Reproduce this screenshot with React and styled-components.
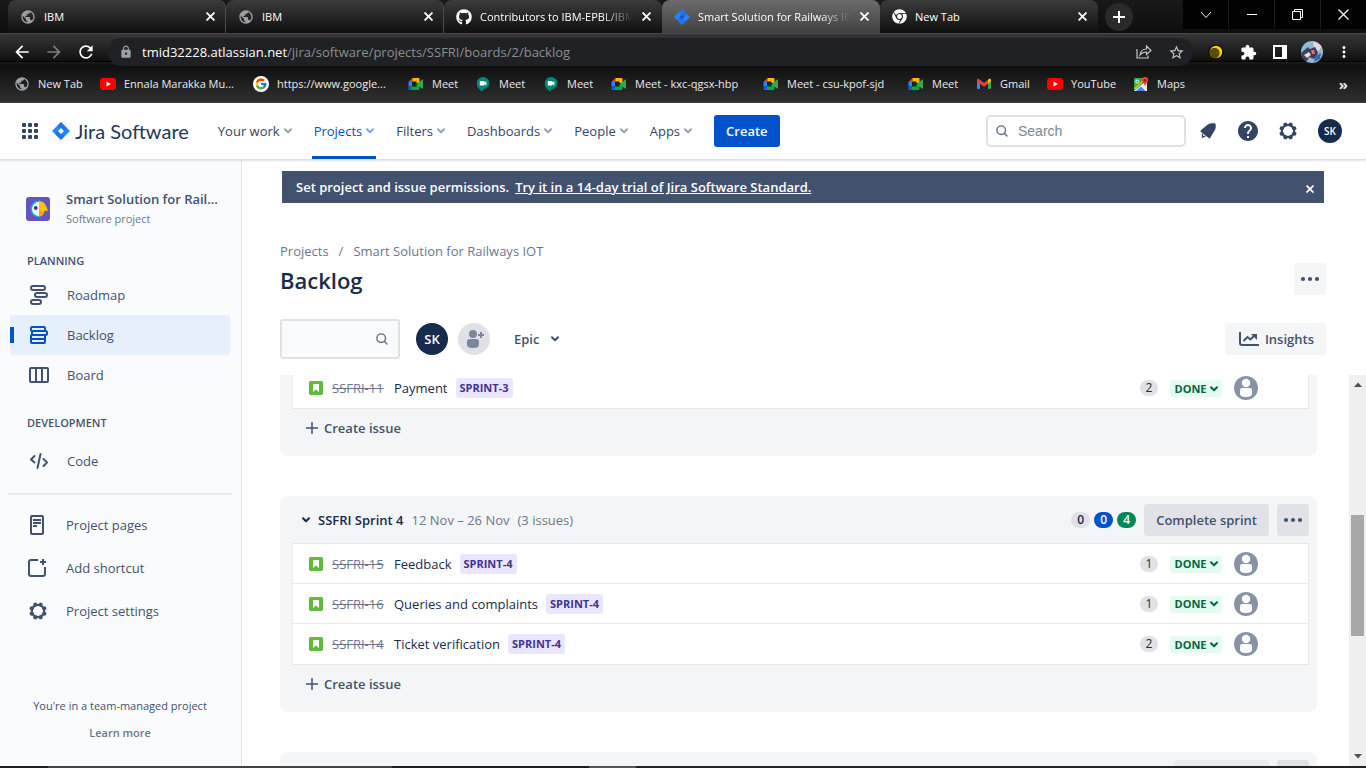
import React from 'react';
import styled, { createGlobalStyle, css } from 'styled-components';
import { FcGoogle } from 'react-icons/fc';
import { FaGithub, FaChrome } from 'react-icons/fa';
import {
  MdPublic, MdLock, MdArrowBack, MdArrowForward, MdRefresh, MdStarBorder,
  MdExtension, MdMoreVert, MdHelp,
} from 'react-icons/md';

const Global = createGlobalStyle`
  *, *::before, *::after { box-sizing: border-box; }
  body { margin: 0; background: #fff; font-family: 'Open Sans', 'Noto Sans', sans-serif; font-size: 13px; line-height: 20px; color: #172b4d; }
  button, input { font: inherit; color: inherit; margin: 0; }
  button { border: 0; background: none; padding: 0; cursor: pointer; }
  a { color: inherit; text-decoration: none; }
  ul { list-style: none; margin: 0; padding: 0; }
  h1, h2, p { margin: 0; }
  svg { display: block; flex: none; }
`;

const Page = styled.div`
  display: flex;
  flex-direction: column;
  height: 100vh;
  overflow: hidden;
`;

/* ---------- browser frame ---------- */

const TabStrip = styled.div`
  display: flex;
  flex: none;
  height: 33px;
  padding-left: 8px;
  background: linear-gradient(#191919, #0e0e0e);
  color: #fff;
  font-size: 11px;
`;

const Tab = styled.div`
  display: flex;
  align-items: center;
  flex: 0 1 218px;
  min-width: 0;
  padding: 0 7px 0 12px;
  gap: 8px;
  border-radius: 8px 8px 0 0;
  background: ${(p) => (p.$active ? 'linear-gradient(#6c6c6c, #404040)' : 'linear-gradient(#3b3b3b, #101010)')};
  border-right: 1px solid ${(p) => (p.$divider ? '#4c4c4c' : 'transparent')};
`;

const TabTitle = styled.span`
  flex: 1;
  min-width: 0;
  overflow: hidden;
  white-space: nowrap;
  ${(p) => p.$fade && css`mask-image: linear-gradient(90deg, #000 80%, transparent 100%);`}
`;

const TabClose = styled.button`
  display: grid;
  place-items: center;
  width: 16px;
  height: 16px;
  margin-left: -3px;
`;

const NewTabButton = styled.button`
  display: grid;
  place-items: center;
  align-self: center;
  width: 28px;
  height: 28px;
  margin-left: 7px;
  border-radius: 50%;
  background: #2a2a2a;
`;

const WindowControls = styled.div`
  display: flex;
  gap: 1px;
  height: 29px;
  margin-left: auto;
  background: #1b1b1b;
`;

const WindowButton = styled.button`
  display: grid;
  place-items: center;
  width: 45px;
  background: #020202;
`;

const Toolbar = styled.div`
  display: flex;
  align-items: flex-start;
  flex: none;
  height: 33px;
  padding: 4px 6px 0;
  border-top: 1px solid #484848;
  background: linear-gradient(#363636 0, #101010 27px, #000 27px, #000 28px, #1c1c1c 28px, #101010 100%);
  color: #fff;
`;

const ToolButton = styled.button`
  display: grid;
  place-items: center;
  flex: none;
  width: 32px;
  height: 28px;
  color: ${(p) => (p.$dim ? '#7d7d7d' : '#fff')};
`;

const AddressBar = styled.div`
  display: flex;
  align-items: center;
  flex: 1;
  height: 28px;
  margin: 0 7px 0 6px;
  padding: 0 1px 0 11px;
  border-radius: 14px;
  background: #202124;
  color: #9aa0a6;
`;

const AddressText = styled.span`
  flex: 1;
  margin-left: 9px;
  font-size: 13px;
  color: #8b8e92;
  b { font-weight: 400; color: #fff; }
`;

const ProfileBubble = styled.span`
  display: block;
  width: 22px;
  height: 22px;
  border-radius: 50%;
  overflow: hidden;
`;

const Bookmarks = styled.nav`
  display: flex;
  align-items: center;
  flex: none;
  height: 37px;
  padding: 0 18px 0 14px;
  border-bottom: 1px solid #3c3c3c;
  background: linear-gradient(#0f0f0f, #303030);
  color: #e8eaed;
  font-size: 11px;
`;

const Bookmark = styled.a`
  display: flex;
  align-items: center;
  gap: 8px;
  flex: 0 1 ${(p) => p.$width}px;
  white-space: nowrap;
`;

const BookmarkOverflow = styled.button`
  margin-left: auto;
  font-size: 15px;
  font-weight: 700;
`;

const TaskbarEdge = styled.div`
  flex: none;
  height: 2px;
  background: linear-gradient(90deg, #222 0 48px, #444 48px 392px, #1e1e1e 392px 589px, #555 589px 636px, #222 636px);
`;

/* ---------- product header ---------- */

const Header = styled.header`
  display: flex;
  align-items: center;
  flex: none;
  height: 57px;
  padding: 0 24px 0 18px;
  border-bottom: 1px solid #dcdfe5;
  box-shadow: 0 1px 2px rgba(9, 30, 66, 0.13);
  position: relative;
  color: #344563;
`;

const Brand = styled.a`
  display: flex;
  align-items: center;
  gap: 5px;
  margin: 0 27px 0 10px;
  font-family: Lato, sans-serif;
  font-size: 20px;
  color: #253858;
`;

const Menu = styled.nav`
  display: flex;
  align-self: stretch;
  gap: 18px;
`;

const MenuItem = styled.button`
  display: flex;
  align-items: center;
  gap: 4px;
  padding: 3px 2px 0;
  border-bottom: 3px solid ${(p) => (p.$active ? '#0052cc' : 'transparent')};
  color: ${(p) => (p.$active ? '#0052cc' : '#344563')};
  font-weight: 500;
  svg { opacity: 0.5; }
`;

const CreateButton = styled.button`
  height: 32px;
  margin-left: 20px;
  padding: 0 12px;
  border-radius: 3px;
  background: #0052cc;
  color: #fff;
  font-weight: 600;
`;

const HeaderSearch = styled.label`
  display: flex;
  align-items: center;
  gap: 9px;
  width: 200px;
  height: 32px;
  margin-left: auto;
  padding: 0 7px;
  border: 2px solid #dfe1e6;
  border-radius: 5px;
  color: #6b778c;
  input {
    width: 100%;
    border: 0;
    outline: 0;
    padding: 0;
    background: none;
    font-family: 'Liberation Sans', Arial, sans-serif;
    font-size: 14px;
  }
  input::placeholder { color: #7a869a; opacity: 1; }
`;

const HeaderActions = styled.div`
  display: flex;
  align-items: center;
  gap: 16px;
  margin: 0 18px 0 10px;
`;

const IconButton = styled.button`
  display: grid;
  place-items: center;
  width: 24px;
  height: 24px;
`;

const Initials = styled.button`
  display: grid;
  place-items: center;
  flex: none;
  width: ${(p) => p.$size}px;
  height: ${(p) => p.$size}px;
  border-radius: 50%;
  background: #172b4d;
  color: #fff;
  font-size: ${(p) => (p.$size > 24 ? 13 : 10)}px;
  font-weight: 600;
`;

/* ---------- body ---------- */

const Body = styled.div`
  display: flex;
  flex: 1;
  min-height: 0;
`;

const Sidebar = styled.aside`
  display: flex;
  flex-direction: column;
  flex: none;
  width: 242px;
  padding: 29px 11px 0 10px;
  border-right: 1px solid #e3e4e8;
  background: #fafbfc;
  color: #42526e;
`;

const ProjectHeading = styled.div`
  display: flex;
  align-items: center;
  gap: 16px;
  height: 40px;
  padding-left: 16px;
  strong { display: block; font-weight: 600; white-space: nowrap; }
  small { display: block; font-size: 11px; color: #6b778c; }
`;

const SectionLabel = styled.h2`
  height: ${(p) => p.$height}px;
  padding: 12px 17px 0;
  margin-top: ${(p) => p.$gap}px;
  font-size: 11px;
  line-height: 16px;
  font-weight: 600;
`;

const NavLink = styled.a`
  display: flex;
  align-items: center;
  gap: 16px;
  height: ${(p) => p.$height || 40}px;
  padding-left: 17px;
  border-radius: 3px;
  ${(p) => p.$active && css`
    background: linear-gradient(#0052cc, #0052cc) 0 50% / 4px 16px no-repeat, #e6effc;
    svg { color: #0052cc; }
  `}
`;

const ToolLinks = styled.div`
  margin-left: -1px;
`;

const Divider = styled.hr`
  width: 224px;
  height: 2px;
  margin: 12px -2px 9px;
  border: 0;
  background: #e8eaed;
`;

const SidebarFooter = styled.div`
  margin: auto 0 22px;
  text-align: center;
  font-size: 11px;
  p { line-height: 22px; margin-bottom: 5px; }
  a { display: block; line-height: 22px; font-weight: 600; color: #6b778c; }
`;

const Main = styled.main`
  display: flex;
  flex-direction: column;
  flex: 1;
  min-width: 0;
  padding-top: 11px;
`;

const Banner = styled.div`
  display: flex;
  align-items: center;
  gap: 6px;
  height: 32px;
  flex: none;
  margin: 0 42px 0 40px;
  padding: 0 10px 0 14px;
  background: #42526e;
  color: #fff;
  font-weight: 600;
  a { text-decoration: underline; }
  button { margin-left: auto; padding-top: 3px; }
`;

const Crumbs = styled.nav`
  display: flex;
  gap: 10px;
  margin: 38px 40px 0 38px;
  color: #6b778c;
`;

const TitleRow = styled.div`
  display: flex;
  align-items: center;
  justify-content: space-between;
  height: 32px;
  margin: 2px 40px 0 38px;
  h1 { font-size: 22px; line-height: 28px; font-weight: 600; padding-top: 2px; }
`;

const Controls = styled.div`
  display: flex;
  align-items: center;
  flex: none;
  height: 40px;
  margin: 24px 40px 16px 38px;
  color: #42526e;
  font-weight: 600;
`;

const FilterBox = styled.label`
  display: flex;
  align-items: center;
  width: 120px;
  height: 40px;
  padding: 0 9px;
  margin-right: 16px;
  border: 2px solid #dfe1e6;
  border-radius: 3px;
  background: #fafbfc;
  input { flex: 1; min-width: 0; border: 0; outline: 0; padding: 0; background: none; }
`;

const AddPeople = styled.button`
  width: 32px;
  height: 32px;
  margin: 0 24px 0 10px;
`;

const EpicButton = styled.button`
  display: flex;
  align-items: center;
  gap: 12px;
`;

const SoftButton = styled.button`
  display: flex;
  align-items: center;
  justify-content: center;
  gap: 6px;
  flex: none;
  min-width: ${(p) => p.$minWidth || 32}px;
  height: 32px;
  padding: 0 ${(p) => (p.$square ? 0 : 12)}px;
  border-radius: 3px;
  background: ${(p) => (p.$strong ? '#e1e2e8' : '#f4f5f7')};
  color: #42526e;
  font-weight: 600;
  &:disabled { background: #eaebee; }
`;

const Push = styled.span`
  flex: 1;
`;

const ScrollArea = styled.div`
  display: flex;
  flex: 1;
  min-height: 0;
  overflow: hidden;
`;

const SprintList = styled.div`
  flex: 1;
  min-width: 0;
  padding: 0 32px 0 38px;
  margin-top: -8px;
`;

const SprintCard = styled.section`
  margin-bottom: 40px;
  padding: 0 8px 9px 12px;
  border-radius: ${(p) => (p.$continued ? '0 0 8px 8px' : '8px')};
  background: #f4f5f7;
`;

const SprintHeader = styled.div`
  display: flex;
  align-items: center;
  height: 47px;
  padding: 1px 0 0 2px;
  h2 { margin: 0 8px 0 0; font-size: 13px; font-weight: 600; }
`;

const SprintMeta = styled.span`
  margin-right: 8px;
  color: #6b778c;
`;

const SprintActions = styled.div`
  display: flex;
  gap: 8px;
`;

const IssueList = styled.ul`
  border: 1px solid #e8e9ed;
  background: #fff;
`;

const IssueRow = styled.li`
  display: flex;
  align-items: center;
  height: 40px;
  padding: 0 50px 0 16px;
  &:not(:last-child) { border-bottom: 1px solid #e8e9ed; }
`;

const IssueKey = styled.a`
  width: 54px;
  margin: 0 8px 0 9px;
  color: #6b778c;
  text-decoration: line-through;
  white-space: nowrap;
`;

const EpicTag = styled.span`
  margin-left: 8px;
  padding: 0 4px;
  border-radius: 3px;
  background: #eae6ff;
  color: #403294;
  font-size: 11px;
  font-weight: 700;
`;

const tones = {
  grey: css`background: #dfe1e6; color: #172b4d;`,
  blue: css`background: #0052cc; color: #fff;`,
  green: css`background: #00875a; color: #fff;`,
};

const Count = styled.span`
  min-width: ${(p) => (p.$wide ? 19 : 18)}px;
  height: 16px;
  border-radius: 8px;
  font-size: 12px;
  line-height: 16px;
  text-align: center;
  font-weight: ${(p) => (p.$wide ? 600 : 400)};
  ${(p) => tones[p.$tone || 'grey']}
`;

const CountGroup = styled.div`
  display: flex;
  gap: 4px;
  margin: 0 8px 0 auto;
`;

const StatusButton = styled.button`
  display: flex;
  align-items: center;
  justify-content: center;
  gap: 3px;
  width: 52px;
  height: 17px;
  margin: 1px 12px 0;
  border-radius: 3px;
  background: #e3fcef;
  color: #006644;
  font-size: 11px;
  line-height: 16px;
  font-weight: 700;
`;

const CreateIssue = styled.button`
  display: flex;
  align-items: center;
  gap: 6px;
  height: 38px;
  padding-left: 14px;
  color: #42526e;
  font-weight: 600;
`;

const ScrollTrack = styled.div`
  display: flex;
  flex-direction: column;
  align-items: center;
  flex: none;
  width: 17px;
  padding: 7px 0;
  background: #f0f0f0;
`;

const ScrollThumb = styled.span`
  flex: 0 1 121px;
  width: 13px;
  background: #a8a8a8;
`;

const ScrollGap = styled.span`
  flex: ${(p) => p.$grow} 1 0;
`;

/* ---------- drawings ---------- */

const Cross = ({ size = 8, width = 2 }) => (
  <svg width={size} height={size} viewBox="0 0 8 8" stroke="currentColor" strokeWidth={width} fill="none">
    <path d="M0.5 0.5l7 7M7.5 0.5l-7 7" />
  </svg>
);

const Chevron = () => (
  <svg width="8" height="6" viewBox="0 0 8 6" fill="none" stroke="currentColor" strokeWidth="2" strokeLinecap="round" strokeLinejoin="round">
    <path d="M1 1.2L4 4.2L7 1.2" />
  </svg>
);

const SearchIcon = () => (
  <svg width="14" height="14" viewBox="0 0 14 14" fill="none" stroke="#5e6c84" strokeWidth="1.4">
    <circle cx="6.2" cy="6.2" r="4.3" />
    <path d="M9.3 9.3L12 12" strokeLinecap="round" />
  </svg>
);

const Dots = () => (
  <svg width="20" height="6" viewBox="0 0 20 6" fill="currentColor">
    <circle cx="3" cy="3" r="2.1" /><circle cx="10" cy="3" r="2.1" /><circle cx="17" cy="3" r="2.1" />
  </svg>
);

const AppGrid = () => (
  <svg width="16" height="16" viewBox="0 0 16 16" fill="currentColor">
    {[0, 6, 12].map((y) => [0, 6, 12].map((x) => <rect key={`${x}-${y}`} x={x} y={y} width="4" height="4" rx="1" />))}
  </svg>
);

const JiraMark = ({ size = 18 }) => (
  <svg width={size} height={size} viewBox="0 0 18 18">
    <path d="M9 0L18 9L9 18L0 9Z" fill="#2684ff" />
    <path d="M9 0L5.6 3.4Q5.6 6 9 6.2L11.8 9L15 6Z" fill="#1868db" opacity="0.55" />
    <path d="M9 18L12.4 14.6Q12.4 12 9 11.8L6.2 9L3 12Z" fill="#1868db" opacity="0.55" />
    <path d="M9 6.1L11.9 9L9 11.9L6.1 9Z" fill={size > 16 ? '#fff' : '#1558bc'} />
  </svg>
);

const Gear = () => (
  <svg width="18" height="18" viewBox="0 0 18 18" fill="currentColor">
    {[22.5, 67.5, 112.5, 157.5, 202.5, 247.5, 292.5, 337.5].map((a) => (
      <rect key={a} x="7.2" y="0.2" width="3.6" height="4" rx="1.2" transform={`rotate(${a} 9 9)`} />
    ))}
    <circle cx="9" cy="9" r="6.2" fill="none" stroke="currentColor" strokeWidth="2.2" />
  </svg>
);

const Horn = () => (
  <svg width="16" height="16" viewBox="0 0 16 16" fill="currentColor">
    <path d="M15.4 0.4C16 2.8 16 5.4 14.6 7.6L9.6 15.8L0.4 8.4C0.6 7.6 1 7 1.8 6.4L7.8 1.6C10 0 12.8 0 15.4 0.4Z" />
    <path d="M2.6 10.8L2.4 14.2L5.4 13.2" fill="none" stroke="currentColor" strokeWidth="1.3" />
  </svg>
);

const ProjectAvatar = () => (
  <svg width="24" height="24" viewBox="0 0 24 24">
    <rect width="24" height="24" rx="3" fill="#6554c0" />
    <path d="M13 3.6A8.4 8.4 0 0 0 13 20.400Z" fill="#00b8d9" />
    <path d="M13 5A7 7 0 0 0 13 19Z" fill="#fff" />
    <path d="M13 4C18 4 20.5 8 21.8 14L18.6 13.4C18 17 16 19.5 13 19.8Z" fill="#ffc400" />
    <path d="M13 12.5L17 15.6C16 18 15 19 13 19.8Z" fill="#ff991f" />
    <circle cx="9.800" cy="11" r="1.900" fill="#403294" />
  </svg>
);

const RoadmapIcon = () => (
  <svg width="24" height="24" viewBox="0 0 24 24" fill="none" stroke="currentColor" strokeWidth="2">
    <rect x="4" y="3" width="14" height="4" rx="2" />
    <rect x="8" y="10" width="12" height="4" rx="2" />
    <rect x="4" y="17" width="10" height="4" rx="2" />
  </svg>
);

const BacklogIcon = () => (
  <svg width="24" height="24" viewBox="0 0 24 24" fill="none" stroke="currentColor" strokeWidth="2">
    <rect x="4" y="4" width="14" height="4" rx="1" />
    <rect x="5" y="8" width="15" height="4" rx="1.5" />
    <rect x="4" y="12" width="14" height="8" rx="1" />
    <path d="M4 16H18" />
  </svg>
);

const BoardIcon = () => (
  <svg width="24" height="24" viewBox="0 0 24 24" fill="none" stroke="currentColor" strokeWidth="2">
    <rect x="3" y="5" width="18" height="14" rx="1" />
    <path d="M9 5V19M15 5V19" />
  </svg>
);

const CodeIcon = () => (
  <svg width="24" height="24" viewBox="0 0 24 24" fill="none" stroke="currentColor" strokeWidth="2" strokeLinecap="round" strokeLinejoin="round">
    <path d="M7.5 7L4 10.500L7.5 13.500M13.500 5L10.500 19M16.500 10L20 13.500L16.500 17" />
  </svg>
);

const PagesIcon = () => (
  <svg width="24" height="24" viewBox="0 0 24 24" fill="none" stroke="currentColor" strokeWidth="2">
    <rect x="5" y="3" width="12" height="18" rx="1" />
    <path d="M7 7H15M7 10H15M7 13H11" />
  </svg>
);

const ShortcutIcon = () => (
  <svg width="24" height="24" viewBox="0 0 24 24" fill="none" stroke="currentColor" strokeWidth="2">
    <path d="M12 4H5Q3 4 3 6V18Q3 20 5 20H17Q19 20 19 18V11" />
    <path d="M17 3V9M14 6H20" />
  </svg>
);

const SettingsIcon = () => (
  <svg width="24" height="24" viewBox="-3 -3 24 24" overflow="visible"><Gear /></svg>
);

const StoryIcon = () => (
  <svg width="14" height="14" viewBox="0 0 14 14">
    <rect width="14" height="14" rx="1.5" fill="#63ba3c" />
    <path d="M4 3.6Q4 3 4.6 3H9.4Q10 3 10 3.6V11L7 8.5L4 11Z" fill="#fff" />
  </svg>
);

const Unassigned = () => (
  <svg width="24" height="24" viewBox="0 0 24 24">
    <circle cx="12" cy="12" r="12" fill="#8993a4" />
    <circle cx="12" cy="7" r="4.2" fill="#fff" />
    <path d="M6 14Q6 12 8 12H16Q18 12 18 14V17.5Q18 21 12 21Q6 21 6 17.5Z" fill="#fff" />
  </svg>
);

const AddPerson = () => (
  <svg width="32" height="32" viewBox="0 0 32 32">
    <circle cx="16" cy="16" r="16" fill="#dfe1e6" />
    <g fill="#7a869a">
      <circle cx="15" cy="11" r="4" />
      <path d="M9 19Q9 16 12 16H18Q21 16 21 19V21.5Q21 25 15 25Q9 25 9 21.5Z" />
      <path d="M22 9H24V11H26V13H24V15H22V13H20V11H22Z" />
    </g>
  </svg>
);

const InsightsIcon = () => (
  <svg width="22" height="16" viewBox="0 0 22 16" fill="none" stroke="currentColor" strokeWidth="2">
    <path d="M3 1V12Q3 14 5 14H22" />
    <path d="M6.5 10L10.5 6L13.5 8.5L18 4" />
    <path d="M14 3H20V9Z" fill="currentColor" stroke="none" />
  </svg>
);

const PlusIcon = ({ size = 12, width = 1.5 }) => (
  <svg width={size} height={size} viewBox="0 0 12 12" stroke="currentColor" strokeWidth={width}>
    <path d="M6 0V12M0 6H12" />
  </svg>
);

const YouTube = () => (
  <svg width="16" height="16" viewBox="0 0 16 16">
    <rect y="2" width="16" height="12" rx="3" fill="#f00" />
    <path d="M6.5 5.5V10.5L10.8 8Z" fill="#fff" />
  </svg>
);

const GoogleBadge = () => (
  <svg width="16" height="16" viewBox="0 0 16 16">
    <circle cx="8" cy="8" r="8" fill="#fff" />
    <FcGoogle x="1.5" y="1.5" size="13" />
  </svg>
);

const Meet = () => (
  <svg width="16" height="16" viewBox="0 0 16 16">
    <path d="M4.5 2L0.5 6H4.5Z" fill="#ea4335" />
    <path d="M0.5 6H4V10.5H0.5Z" fill="#2684fc" />
    <path d="M0.5 10.5H4V14H1.5Q0.5 14 0.500 13Z" fill="#0066da" />
    <path d="M4.5 2H10.5Q11.5 2 11.5 3V7H8.5V5.5H4.5Z" fill="#ffba00" />
    <path d="M4 10.5H8.500V8H11.5V13Q11.5 14 10.5 14H4Z" fill="#00ac47" />
    <path d="M9 8L15 3V13L11 10.500Z" fill="#34a853" />
  </svg>
);

const MeetOld = () => (
  <svg width="16" height="16" viewBox="0 0 16 16">
    <path d="M8 1A6.200 6.200 0 1 1 8 13.400V15.500C4 14 1.800 11 1.800 7.200A6.200 6.200 0 0 1 8 1Z" fill="#00897b" />
    <path d="M4.800 5H9.400V6.600L11.400 5.200V9.400L9.400 8V9.600H4.800Z" fill="#fff" />
  </svg>
);

const Gmail = () => (
  <svg width="16" height="16" viewBox="0 0 16 16">
    <path d="M1 4V12Q1 13 2 13H4V6Z" fill="#4285f4" />
    <path d="M15 4V12Q15 13 14 13H12V6Z" fill="#34a853" />
    <path d="M1 4Q1 2 3 3L8 7L13 3Q15 2 15 4V5.500L8 10.800L1 5.500Z" fill="#ea4335" />
    <path d="M12 3.800L13 3Q15 2 15 4V5.500L12 7.800Z" fill="#fbbc04" />
  </svg>
);

const Maps = () => (
  <svg width="16" height="16" viewBox="0 0 16 16">
    <rect x="1" y="2" width="13" height="13" rx="1" fill="#34a853" />
    <path d="M1 15L14 4V15Z" fill="#e8eaed" />
    <path d="M3 15L8 10.500L12.500 15Z" fill="#4285f4" />
    <path d="M1.500 13L10 4.500" stroke="#fbbc04" strokeWidth="1.500" />
    <path d="M12 1A3.200 3.200 0 0 1 15.200 4.200C15.200 6.500 12.500 7.500 12 10.500C11.500 7.500 8.800 6.500 8.800 4.200A3.200 3.200 0 0 1 12 1Z" fill="#ea4335" />
    <circle cx="12" cy="4.200" r="1.200" fill="#811e16" />
    <circle cx="4.200" cy="5.500" r="1.500" fill="none" stroke="#fff" />
  </svg>
);

const ShareIcon = () => (
  <svg width="16" height="14" viewBox="0 0 16 14" fill="none" stroke="#c4c7c5" strokeWidth="1.200">
    <path d="M1 4V13H12V10.500" />
    <path d="M4 10C4.500 6 7 4 10.500 4V1L15 5.500L10.500 9.500V7C7.500 7 5.500 8 4 10Z" />
  </svg>
);

const Moon = () => (
  <svg width="16" height="16" viewBox="0 0 16 16">
    <circle cx="8" cy="8" r="7.600" fill="#0a0a0a" />
    <circle cx="8" cy="8" r="6.200" fill="#ffd600" />
    <circle cx="6.500" cy="9" r="5.200" fill="#5b4c08" />
  </svg>
);

const SidePanel = () => (
  <svg width="14" height="14" viewBox="0 0 14 14">
    <path fill="#fff" fillRule="evenodd" d="M0 0H14V14H0ZM2 2V12H9V2Z" />
  </svg>
);

const ProfileArt = () => (
  <svg width="22" height="22" viewBox="0 0 22 22">
    <rect width="22" height="22" fill="#8fb9d6" />
    <path d="M0 12L7 6L11 11L6 20H0Z" fill="#37425c" />
    <path d="M12 0L21 5L18 10L13 7Z" fill="#e9d5dc" />
    <path d="M9 8L14 6L17 12L13 18L8 16Z" fill="#4d3353" />
    <path d="M3 14L8 11L10 14L6 17Z" fill="#f0d9d4" />
    <path d="M10 9L13 9L14 13L11 13Z" fill="#cf7a7c" />
    <path d="M14 15L20 12L19 18L13 21Z" fill="#2f6ba5" />
  </svg>
);

const windowActions = [
  ['Search tabs', <svg width="14" height="8" viewBox="0 0 14 8" fill="none" stroke="#fff"><path d="M2 1L7 6.500L12 1" /></svg>],
  ['Minimise', <svg width="10" height="2" viewBox="0 0 10 2"><rect width="10" height="1" fill="#fff" /></svg>],
  ['Restore', <svg width="11" height="11" viewBox="0 0 11 11" fill="none" stroke="#fff"><path d="M0.500 2.500H8.500V10.500H0.500ZM2.500 2.500V0.500H10.500V8.500H8.500" /></svg>],
  ['Close', <svg width="11" height="11" viewBox="0 0 11 11" fill="none" stroke="#fff" strokeWidth="1.200"><path d="M0.500 0.500L10.500 10.500M10.500 0.500L0.500 10.500" /></svg>],
];

/* ---------- data ---------- */

const tabs = [
  { title: 'IBM', icon: <MdPublic size={16} color="#9aa0a6" />, divider: true },
  { title: 'IBM', icon: <MdPublic size={16} color="#9aa0a6" />, divider: true },
  { title: 'Contributors to IBM-EPBL/IBM-Project', icon: <FaGithub size={16} />, fade: true },
  { title: 'Smart Solution for Railways IOT', icon: <JiraMark size={16} />, fade: true, active: true },
  { title: 'New Tab', icon: <FaChrome size={15} /> },
];

const bookmarks = [
  ['New Tab', <MdPublic size={16} color="#9aa0a6" />, 86],
  ['Ennala Marakka Mu...', <YouTube />, 153],
  ['https://www.google...', <GoogleBadge />, 155],
  ['Meet', <Meet />, 67],
  ['Meet', <MeetOld />, 68],
  ['Meet', <MeetOld />, 68],
  ['Meet - kxc-qgsx-hbp', <Meet />, 152],
  ['Meet - csu-kpof-sjd', <Meet />, 145],
  ['Meet', <Meet />, 68],
  ['Gmail', <Gmail />, 71],
  ['YouTube', <YouTube />, 86],
  ['Maps', <Maps />, 60],
];

const menu = ['Your work', 'Projects', 'Filters', 'Dashboards', 'People', 'Apps'];

const sprintFour = [
  { id: 'SSFRI-15', title: 'Feedback', tag: 'SPRINT-4', points: 1 },
  { id: 'SSFRI-16', title: 'Queries and complaints', tag: 'SPRINT-4', points: 1 },
  { id: 'SSFRI-14', title: 'Ticket verification', tag: 'SPRINT-4', points: 2 },
];

const sprintThree = [{ id: 'SSFRI-11', title: 'Payment', tag: 'SPRINT-3', points: 2 }];

const Issues = ({ items }) => (
  <IssueList>
    {items.map((issue) => (
      <IssueRow key={issue.id}>
        <StoryIcon />
        <IssueKey href="#">{issue.id}</IssueKey>
        <span>{issue.title}</span>
        <EpicTag>{issue.tag}</EpicTag>
        <Push />
        <Count>{issue.points}</Count>
        <StatusButton>DONE<Chevron /></StatusButton>
        <Unassigned />
      </IssueRow>
    ))}
  </IssueList>
);

export default function App() {
  return (
    <Page>
      <Global />
      <TabStrip>
        {tabs.map((tab, i) => (
          <Tab key={i} $active={tab.active} $divider={tab.divider}>
            {tab.icon}
            <TabTitle $fade={tab.fade}>{tab.title}</TabTitle>
            <TabClose aria-label="Close tab"><Cross size={9} width={1.6} /></TabClose>
          </Tab>
        ))}
        <NewTabButton aria-label="New tab"><PlusIcon width={2} /></NewTabButton>
        <WindowControls>
          {windowActions.map(([label, icon]) => <WindowButton key={label} aria-label={label}>{icon}</WindowButton>)}
        </WindowControls>
      </TabStrip>
      <Toolbar>
        <ToolButton aria-label="Back"><MdArrowBack size={20} /></ToolButton>
        <ToolButton $dim aria-label="Forward"><MdArrowForward size={20} /></ToolButton>
        <ToolButton aria-label="Reload"><MdRefresh size={20} /></ToolButton>
        <AddressBar>
          <MdLock size={14} />
          <AddressText><b>tmid32228.atlassian.net</b>/jira/software/projects/SSFRI/boards/2/backlog</AddressText>
          <ToolButton aria-label="Share"><ShareIcon /></ToolButton>
          <ToolButton aria-label="Bookmark this tab"><MdStarBorder size={17} color="#c4c7c5" /></ToolButton>
        </AddressBar>
        <ToolButton aria-label="Dark mode"><Moon /></ToolButton>
        <ToolButton aria-label="Extensions"><MdExtension size={17} /></ToolButton>
        <ToolButton aria-label="Side panel"><SidePanel /></ToolButton>
        <ToolButton aria-label="Profile"><ProfileBubble><ProfileArt /></ProfileBubble></ToolButton>
        <ToolButton aria-label="Menu"><MdMoreVert size={18} /></ToolButton>
      </Toolbar>
      <Bookmarks>
        {bookmarks.map(([label, icon, width], i) => (
          <Bookmark href="#" key={i} $width={width}>{icon}{label}</Bookmark>
        ))}
        <BookmarkOverflow>»</BookmarkOverflow>
      </Bookmarks>

      <Header>
        <IconButton aria-label="Switch to"><AppGrid /></IconButton>
        <Brand href="#"><JiraMark />Jira Software</Brand>
        <Menu>
          {menu.map((label) => (
            <MenuItem key={label} $active={label === 'Projects'}>{label}<Chevron /></MenuItem>
          ))}
        </Menu>
        <CreateButton>Create</CreateButton>
        <HeaderSearch>
          <SearchIcon />
          <input type="text" placeholder="Search" aria-label="Search" />
        </HeaderSearch>
        <HeaderActions>
          <IconButton aria-label="Notifications"><Horn /></IconButton>
          <IconButton aria-label="Help"><MdHelp size={24} /></IconButton>
          <IconButton aria-label="Settings"><Gear /></IconButton>
        </HeaderActions>
        <Initials $size={24}>SK</Initials>
      </Header>

      <Body>
        <Sidebar>
          <ProjectHeading>
            <ProjectAvatar />
            <div>
              <strong>Smart Solution for Rail...</strong>
              <small>Software project</small>
            </div>
          </ProjectHeading>
          <SectionLabel $gap={12} $height={34}>PLANNING</SectionLabel>
          <NavLink href="#"><RoadmapIcon />Roadmap</NavLink>
          <NavLink href="#" $active><BacklogIcon />Backlog</NavLink>
          <NavLink href="#"><BoardIcon />Board</NavLink>
          <SectionLabel $gap={8} $height={38}>DEVELOPMENT</SectionLabel>
          <NavLink href="#"><CodeIcon />Code</NavLink>
          <Divider />
          <ToolLinks>
            <NavLink href="#" $height={42}><PagesIcon />Project pages</NavLink>
            <NavLink href="#" $height={44}><ShortcutIcon />Add shortcut</NavLink>
            <NavLink href="#" $height={42}><SettingsIcon />Project settings</NavLink>
          </ToolLinks>
          <SidebarFooter>
            <p>You're in a team-managed project</p>
            <a href="#">Learn more</a>
          </SidebarFooter>
        </Sidebar>

        <Main>
          <Banner>
            <span>Set project and issue permissions.</span>
            <a href="#">Try it in a 14-day trial of Jira Software Standard.</a>
            <button aria-label="Dismiss"><Cross size={8} width={1.8} /></button>
          </Banner>
          <Crumbs>
            <a href="#">Projects</a><span>/</span><a href="#">Smart Solution for Railways IOT</a>
          </Crumbs>
          <TitleRow>
            <h1>Backlog</h1>
            <SoftButton $square aria-label="More actions"><Dots /></SoftButton>
          </TitleRow>
          <Controls>
            <FilterBox>
              <input type="text" aria-label="Search backlog" />
              <SearchIcon />
            </FilterBox>
            <Initials $size={32}>SK</Initials>
            <AddPeople aria-label="Add people"><AddPerson /></AddPeople>
            <EpicButton>Epic<Chevron /></EpicButton>
            <Push />
            <SoftButton><InsightsIcon />Insights</SoftButton>
          </Controls>
          <ScrollArea>
            <SprintList>
              <SprintCard $continued>
                <Issues items={sprintThree} />
                <CreateIssue><PlusIcon />Create issue</CreateIssue>
              </SprintCard>
              <SprintCard>
                <SprintHeader>
                  <IconButton aria-label="Collapse sprint"><Chevron /></IconButton>
                  <h2>SSFRI Sprint 4</h2>
                  <SprintMeta>12 Nov – 26 Nov</SprintMeta>
                  <SprintMeta>(3 issues)</SprintMeta>
                  <CountGroup>
                    <Count $wide>0</Count>
                    <Count $wide $tone="blue">0</Count>
                    <Count $wide $tone="green">4</Count>
                  </CountGroup>
                  <SprintActions>
                    <SoftButton $strong>Complete sprint</SoftButton>
                    <SoftButton $strong $square aria-label="Sprint actions"><Dots /></SoftButton>
                  </SprintActions>
                </SprintHeader>
                <Issues items={sprintFour} />
                <CreateIssue><PlusIcon />Create issue</CreateIssue>
              </SprintCard>
              <SprintCard>
                <SprintHeader>
                  <Push />
                  <SprintActions>
                    <SoftButton disabled $minWidth={95} aria-label="Start sprint" />
                    <SoftButton $strong $square aria-label="Sprint actions" />
                  </SprintActions>
                </SprintHeader>
              </SprintCard>
            </SprintList>
            <ScrollTrack>
              <svg width="8" height="5" viewBox="0 0 8 5"><path d="M0 5L4 0.500L8 5Z" fill="#505050" /></svg>
              <ScrollGap $grow={128} />
              <ScrollThumb />
              <ScrollGap $grow={118} />
              <svg width="8" height="5" viewBox="0 0 8 5"><path d="M0 0L4 4.500L8 0Z" fill="#505050" /></svg>
            </ScrollTrack>
          </ScrollArea>
        </Main>
      </Body>
      <TaskbarEdge />
    </Page>
  );
}
